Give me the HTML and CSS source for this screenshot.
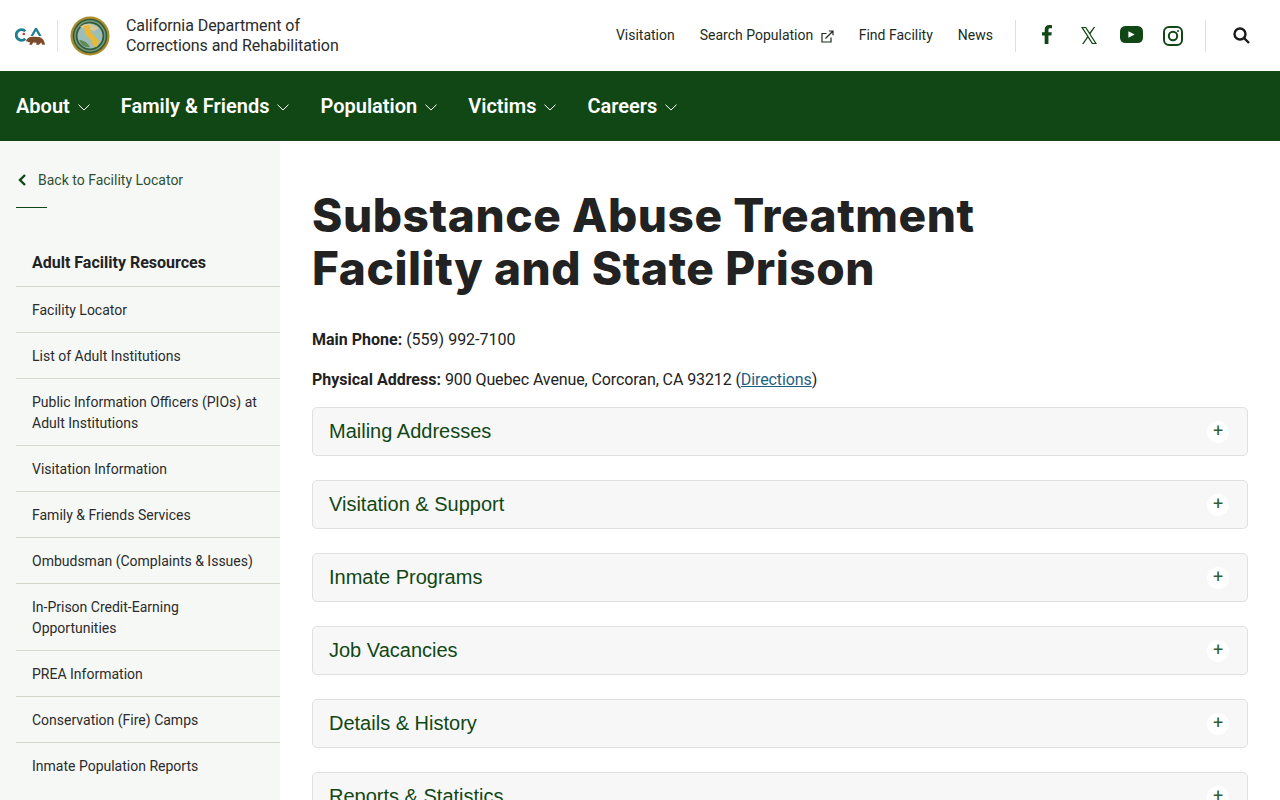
FILE: index.html
```html
<!DOCTYPE html>
<html lang="en">
<head>
  <meta charset="UTF-8" />
  <meta name="viewport" content="width=device-width, initial-scale=1.0" />
  <title>Substance Abuse Treatment Facility and State Prison</title>
  <link rel="stylesheet" href="styles.css">
</head>
<body>
<div class="page">
  <header class="top">
    <div class="brand">
      <svg class="ca-logo" width="31" height="20" viewBox="0 0 31 20">
        <path d="M10.300 4.300A5.300 5.300 0 1 0 10.300 11.700" fill="none" stroke="#1f7f93" stroke-width="2.800"/>
        <circle cx="8.800" cy="7" r="1.300" fill="#c8393b"/>
        <path d="M15.500 9 20 1h2l4.500 8h-2.600L21 4l-3 5z" fill="#1f7f93"/>
        <path d="M11 14c1-3 4-4.500 7-4.300 3 .2 6-.2 8 1 2 1.100 3.500 3.500 4 7l-2.800.1-1-2.300-2.200 2.300H21l.7-2-3.700-.3-1 2.300h-2.600l.6-2.700c-1.500.1-3 0-4-1.100z" fill="#7a4a2b"/>
      </svg>
      <span class="brand-line"></span>
      <svg class="seal" width="40" height="40" viewBox="0 0 40 40">
        <circle cx="20" cy="20" r="19.500" fill="#a98b2c"/>
        <circle cx="20" cy="20" r="17.300" fill="#2f5d3a"/>
        <circle cx="20" cy="20" r="15" fill="none" stroke="#7f9a80" stroke-width="1.400"/>
        <circle cx="20" cy="20" r="12.500" fill="#9dbdb9"/>
        <path d="M10 11c3-3 7-4 11-3l8 4-5 3z" fill="#d6c89a"/>
        <path d="M14 10 19 9 21 16 29 25 27 31 23 30 21 24 15 18z" fill="#e6b93a"/>
        <path d="M9 24c4 0 8 2 11 7-5 1-9-2-11-7z" fill="#5f8a55"/>
      </svg>
      <div class="brand-name">California Department of<br>Corrections and Rehabilitation</div>
    </div>
    <div class="top-right">
      <nav class="util">
        <a href="#">Visitation</a>
        <a href="#">Search Population
          <svg class="ext" width="13" height="13" viewBox="0 0 13 13" fill="none" stroke="#1c2b1c" stroke-width="1.200">
            <path d="M10 7.500V12H1V3.500h4.500"/><path d="M4.500 8.500 12 1M7.800 1H12v4.200"/>
          </svg>
        </a>
        <a href="#">Find Facility</a>
        <a href="#">News</a>
      </nav>
      <span class="divider"></span>
      <div class="social">
        <svg class="up" width="10" height="19" viewBox="0 0 9 18" preserveAspectRatio="none"><path d="M2.400 18V10H0V6.800h2.400V4.500C2.400 1.600 4 0 6.600 0 7.700 0 8.600.1 9 .2v2.900H7.300C6.100 3.100 5.800 3.700 5.800 4.700v2.100h3L8.400 10H5.800v8z" fill="#114714"/></svg>
        <svg width="16" height="17" viewBox="1 2 22 20" preserveAspectRatio="none"><path fill-rule="evenodd" d="M1 2h7l5 6.600L18.500 2h2l-6.500 8.200L23 22h-7l-5.500-7.300L4.500 22h-2l7-8.800zM4 3.200 17.200 20.800h2.900L7 3.200z" fill="#114714"/></svg>
        <svg class="up" width="23" height="17" viewBox="0 0 22 16" preserveAspectRatio="none"><rect width="22" height="16" rx="5" fill="#114714"/><path d="M8 5v6l6-3z" fill="#fff"/></svg>
        <svg width="20" height="20" viewBox="0 0 20 20" fill="none" stroke="#114714"><rect x="1" y="1" width="18" height="18" rx="5" stroke-width="2"/><circle cx="10" cy="10" r="4.200" stroke-width="2"/><circle cx="15" cy="5" r="1" fill="#114714" stroke="none"/></svg>
      </div>
      <span class="divider"></span>
      <svg class="search" width="17" height="17" viewBox="0 0 17 17" fill="none" stroke="#1a1a1a" stroke-width="2.400"><circle cx="7" cy="7" r="5.500"/><path d="M11 11l5 5"/></svg>
    </div>
  </header>

  <nav class="main-nav">
    <a href="#">About <svg width="12" height="7" viewBox="0 0 12 7"><path d="M.5.700 6 6 11.500.700"/></svg></a>
    <a href="#">Family &amp; Friends <svg width="12" height="7" viewBox="0 0 12 7"><path d="M.5.700 6 6 11.500.700"/></svg></a>
    <a href="#">Population <svg width="12" height="7" viewBox="0 0 12 7"><path d="M.5.700 6 6 11.500.700"/></svg></a>
    <a href="#">Victims <svg width="12" height="7" viewBox="0 0 12 7"><path d="M.5.700 6 6 11.500.700"/></svg></a>
    <a href="#">Careers <svg width="12" height="7" viewBox="0 0 12 7"><path d="M.5.700 6 6 11.500.700"/></svg></a>
  </nav>

  <div class="columns">
    <aside class="side">
      <a class="back" href="#">
        <svg width="8" height="12" viewBox="0 0 8 12" fill="none" stroke="#114714" stroke-width="2.400"><path d="M7 1 2 6l5 5"/></svg>
        Back to Facility Locator
      </a>
      <div class="back-rule"></div>
      <h2 class="side-title">Adult Facility Resources</h2>
      <ul class="side-list">
        <li><a href="#">Facility Locator</a></li>
        <li><a href="#">List of Adult Institutions</a></li>
        <li><a href="#">Public Information Officers (PIOs) at Adult Institutions</a></li>
        <li><a href="#">Visitation Information</a></li>
        <li><a href="#">Family &amp; Friends Services</a></li>
        <li><a href="#">Ombudsman (Complaints &amp; Issues)</a></li>
        <li><a href="#">In-Prison Credit-Earning Opportunities</a></li>
        <li><a href="#">PREA Information</a></li>
        <li><a href="#">Conservation (Fire) Camps</a></li>
        <li><a href="#">Inmate Population Reports</a></li>
      </ul>
    </aside>

    <main class="content">
      <h1>Substance Abuse Treatment Facility and State Prison</h1>
      <p class="info"><strong>Main Phone:</strong> (559) 992-7100</p>
      <p class="info"><strong>Physical Address:</strong> <span class="tight">900 Quebec Avenue, Corcoran, CA 93212 (<a href="#">Directions</a>)</span></p>
      <div class="accordions">
        <div class="acc"><span>Mailing Addresses</span><b class="plus">+</b></div>
        <div class="acc"><span>Visitation &amp; Support</span><b class="plus">+</b></div>
        <div class="acc"><span>Inmate Programs</span><b class="plus">+</b></div>
        <div class="acc"><span>Job Vacancies</span><b class="plus">+</b></div>
        <div class="acc"><span>Details &amp; History</span><b class="plus">+</b></div>
        <div class="acc"><span>Reports &amp; Statistics</span><b class="plus">+</b></div>
      </div>
    </main>
  </div>
</div>
</body>
</html>
```

FILE: styles.css
```css
*{
  margin:0;
  padding:0;
  box-sizing:border-box;
}

body{
  font-family:Roboto,"Liberation Sans",sans-serif;
  color:#1d1d1d;
  background:#fff;
}

a{
  color:inherit;
  text-decoration:none;
}

.page{
  height:100vh;
  overflow:hidden;
}

.top{
  height:71px;
  display:flex;
  align-items:center;
  justify-content:space-between;
  padding:0 30px 0 15px;
}

.brand{
  display:flex;
  align-items:center;
}

.brand-line{
  width:1px;
  height:32px;
  background:#e3e3e3;
  margin:0 12px 0 11px;
}

.ca-logo{
  margin-top:3px;
}

.brand-name{
  margin-left:16px;
  font-size:16px;
  line-height:20px;
  letter-spacing:-.06px;
  color:#2b2b2b;
}

.top-right{
  display:flex;
  align-items:center;
}

.util{
  display:flex;
  gap:25px;
  font-size:14px;
  color:#1c2b1c;
  padding-bottom:2px;
}

.ext{
  margin-left:4px;
  vertical-align:-3px;
}

.divider{
  width:1px;
  height:32px;
  background:#dedede;
  margin-left:22px;
}

.social{
  display:grid;
  grid-template-columns:repeat(4,42px);
  justify-items:center;
  align-items:center;
  margin-left:10px;
  margin-right:11px;
}

.social .up{
  margin-bottom:2px;
}

.social + .divider{
  margin-left:0;
}

.search{
  margin-left:27px;
}

.main-nav{
  height:70px;
  background:#114714;
  display:flex;
  align-items:center;
  gap:31px;
  padding-left:16px;
}

.main-nav a{
  color:#fff;
  font-size:20px;
  font-weight:600;
  display:flex;
  align-items:center;
  gap:8px;
}

.main-nav svg{
  fill:none;
  stroke:#fff;
  stroke-width:1;
  margin-top:2px;
}

.columns{
  display:flex;
}

.side{
  width:280px;
  flex-shrink:0;
  background:#f6f8f6;
  padding:30px 0 0 16px;
  min-height:800px;
}

.back{
  display:flex;
  align-items:center;
  gap:12px;
  font-size:14px;
  line-height:18px;
  color:#2f4f33;
  padding-left:2px;
}

.back-rule{
  width:31px;
  height:1px;
  background:#114714;
  margin-top:18px;
}

.side-title{
  font-size:16px;
  font-weight:700;
  line-height:20px;
  margin-top:45px;
  padding:0 0 13px 16px;
  color:#222;
  border-bottom:1px solid #d3dacb;
}

.side-list{
  list-style:none;
}

.side-list li{
  border-bottom:1px solid #d3dacb;
  padding:13px 16px 11px;
  font-size:14px;
  line-height:21px;
  color:#2b2b2b;
}

.side-list li:last-child{
  border-bottom:none;
}

.content{
  flex:1;
  padding:48px 32px 0;
}

h1{
  font-family:Inter,"Liberation Sans",sans-serif;
  font-size:46px;
  font-weight:800;
  line-height:53px;
  letter-spacing:.55px;
  color:#222;
  max-width:700px;
}

.info{
  font-size:16px;
  line-height:24px;
  color:#222;
  margin-top:16px;
}

h1 + .info{
  margin-top:33px;
}

.info strong{
  font-weight:700;
}

.tight{
  letter-spacing:-.1px;
}

.info a{
  color:#1f5f85;
  text-decoration:underline;
}

.accordions{
  margin-top:15px;
  display:flex;
  flex-direction:column;
  gap:24px;
}

.acc{
  height:49px;
  background:#f7f7f7;
  border:1px solid #e0e0e0;
  border-radius:5px;
  display:flex;
  align-items:center;
  justify-content:space-between;
  padding:0 18px 0 16px;
  font-family:"Liberation Sans",Arial,sans-serif;
  font-size:20px;
  color:#114714;
}

.plus{
  width:22px;
  height:22px;
  border-radius:50%;
  background:#fff;
  font-family:Roboto,sans-serif;
  font-size:18px;
  font-weight:400;
  line-height:20px;
  text-align:center;
  color:#2f5f33;
}
```
